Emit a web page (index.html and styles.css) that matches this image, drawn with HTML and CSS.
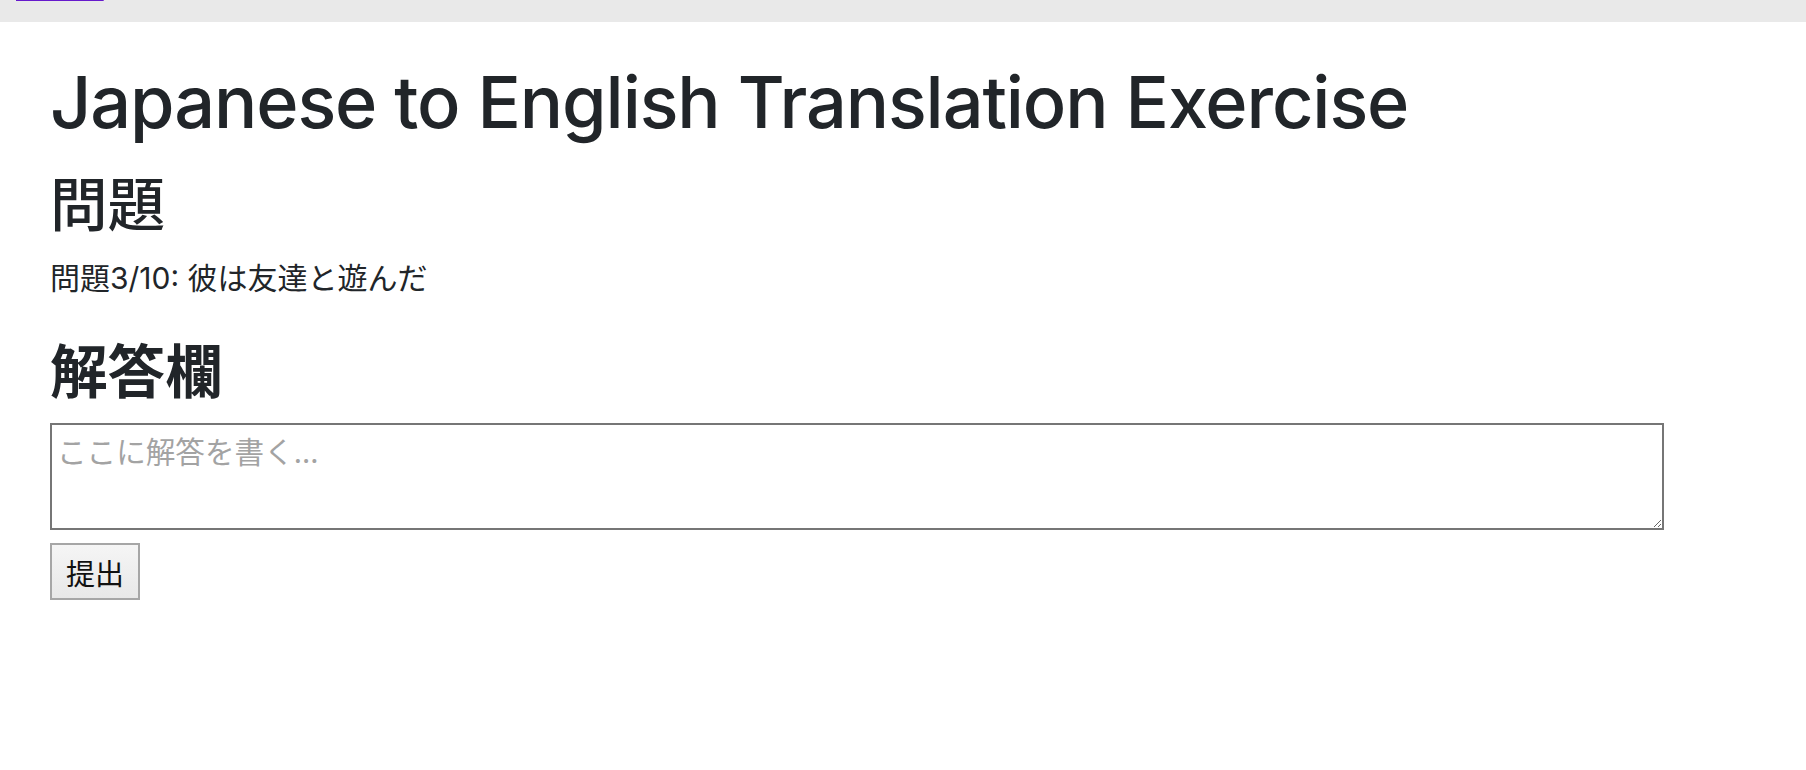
FILE: index.html
```html
<!DOCTYPE html>
<html lang="ja">
<head>
<meta charset="utf-8">
<title>Japanese to English Translation Exercise</title>
<link rel="stylesheet" href="styles.css">
</head>
<body>
<div class="topbar"><a class="back-link" href="#">ホームに戻る</a></div>
<main class="page">
  <h1 class="title">Japanese to English Translation Exercise</h1>
  <h2 class="section-title question-title">問題</h2>
  <p class="question">問題3/10: 彼は友達と遊んだ</p>
  <h2 class="section-title answer-title">解答欄</h2>
  <form class="answer-form">
    <textarea class="answer-box" rows="2" placeholder="ここに解答を書く..."></textarea>
    <button type="button" class="submit-btn">提出</button>
  </form>
</main>
</body>
</html>
```

FILE: styles.css
```css
html, body {
  margin: 0;
  padding: 0;
  background: #ffffff;
}

body {
  font-family: "Inter", "Noto Sans CJK JP", sans-serif;
  color: #212529;
}

.topbar {
  display: flex;
  align-items: flex-start;
  height: 22px;
  background: #e9e9e9;
  overflow: hidden;
  padding-left: 16px;
}

.back-link {
  display: block;
  margin-top: -16px;
  font-family: "Noto Sans CJK JP", sans-serif;
  font-size: 14.7px;
  line-height: 16px;
  color: #661acc;
  text-decoration: underline;
  text-decoration-thickness: 2px;
  text-underline-offset: 1px;
}

.page {
  display: flex;
  flex-direction: column;
  align-items: flex-start;
  padding: 37px 0 0 50px;
  width: 1614px;
}

.title {
  margin: 0;
  font-size: 72px;
  line-height: 86px;
  font-weight: 500;
  letter-spacing: -1.1px;
}

.section-title {
  margin: 0;
  font-size: 57.6px;
  line-height: 69px;
  font-family: "Noto Sans CJK JP", sans-serif;
}

.question-title {
  margin-top: 22px;
  font-weight: 500;
}

.answer-title {
  margin-top: 34px;
  font-weight: 700;
}

.question {
  margin: 21px 0 0;
  font-size: 30px;
  line-height: 43.2px;
}

.answer-form {
  display: flex;
  flex-direction: column;
  align-items: flex-start;
  gap: 13px;
  margin-top: 20px;
  width: 100%;
}

.answer-box {
  box-sizing: border-box;
  width: 1614px;
  height: 107px;
  margin: 0;
  padding: 4px 5px;
  border: 2px solid #767676;
  border-radius: 0;
  font-family: "Noto Sans CJK JP", sans-serif;
  font-size: 29.6px;
  line-height: 1.5;
  color: #212529;
  resize: vertical;
}

.answer-box::placeholder {
  color: #a3a3a3;
}

.submit-btn {
  box-sizing: border-box;
  width: 90px;
  height: 57px;
  margin: 0;
  padding: 0 14px;
  border: 2px solid #a6a6a6;
  border-radius: 0;
  background: linear-gradient(#f5f5f5, #e8e8e8);
  font-family: "Noto Sans CJK JP", sans-serif;
  font-size: 29px;
  color: #111111;
}
```
